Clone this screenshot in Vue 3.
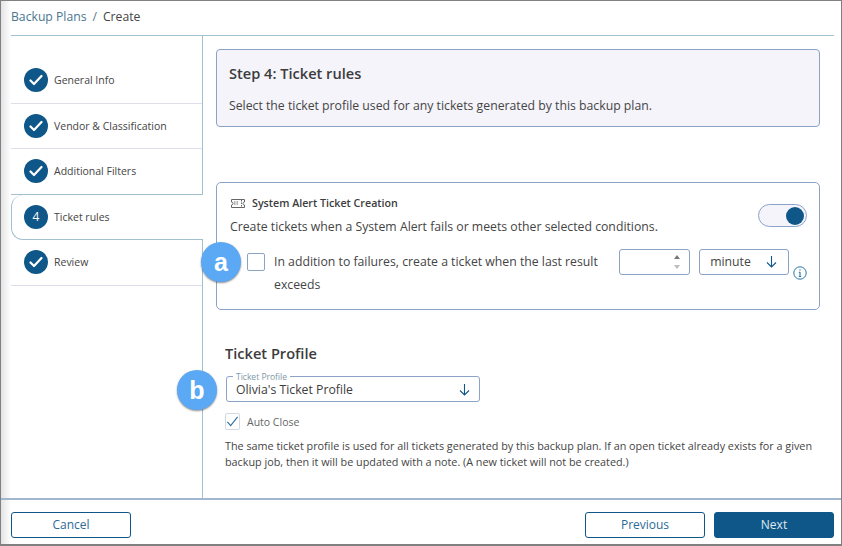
<template>
  <div class="page">
    <header class="crumbs">
      <span class="crumb-link">Backup Plans</span>
      <span class="crumb-sep">/</span>
      <span class="crumb-current">Create</span>
    </header>

    <div class="body">
      <nav class="steps">
        <div
          v-for="step in steps"
          :key="step.label"
          class="step"
          :class="{ active: step.active }"
        >
          <span class="step-dot">
            <template v-if="step.active">{{ step.num }}</template>
            <svg v-else width="14" height="12" viewBox="0 0 14 12" fill="none">
              <path d="M1.5 6.5 L5 10 L12.5 2" stroke="#fff" stroke-width="2.2" stroke-linecap="round" stroke-linejoin="round" />
            </svg>
          </span>
          <span class="step-label">{{ step.label }}</span>
        </div>
      </nav>

      <main class="content">
        <section class="intro">
          <h2>Step 4: Ticket rules</h2>
          <p>Select the ticket profile used for any tickets generated by this backup plan.</p>
        </section>

        <section class="alert-card">
          <span class="badge badge-a">a</span>
          <div class="alert-title">
            <svg width="16" height="11" viewBox="0 0 16 11" fill="none" stroke="#666" stroke-width="1">
              <path d="M1.5 1.5 H14.5 V4 a1.5 1.5 0 0 0 0 3 V9.5 H1.5 V7 a1.5 1.5 0 0 0 0 -3 Z" />
              <path d="M4 4 H9 M4 6 H9 M11.5 2 V9" stroke-dasharray="1.5 1" />
            </svg>
            <span>System Alert Ticket Creation</span>
          </div>
          <div class="alert-desc-row">
            <p>Create tickets when a System Alert fails or meets other selected conditions.</p>
            <span class="toggle"><span class="knob"></span></span>
          </div>
          <div class="exceed-row">
            <span class="box"></span>
            <p class="exceed-text">In addition to failures, create a ticket when the last result exceeds</p>
            <div class="number-input">
              <span class="arrow-up"></span>
              <span class="arrow-down"></span>
            </div>
            <div class="unit-select">
              <span>minute</span>
              <svg width="11" height="13" viewBox="0 0 11 13" fill="none" stroke="#0f5788" stroke-width="1.1">
                <path d="M5.5 1 V11.5 M1 7.5 L5.5 12 L10 7.5" />
              </svg>
            </div>
            <svg class="info" width="14" height="14" viewBox="0 0 14 14" fill="none" stroke="#2a76a8">
              <circle cx="7" cy="7" r="6.2" />
              <path d="M7 6 V10.3 M5.8 6.2 H7 M5.8 10.5 H8.2" stroke-width="1.1" />
              <path d="M7 3.4 V4.6" stroke-width="1.4" />
            </svg>
          </div>
        </section>

        <section class="profile">
          <h3>Ticket Profile</h3>
          <div class="profile-select">
            <span class="badge badge-b">b</span>
            <span class="float-label">Ticket Profile</span>
            <span class="profile-value">Olivia's Ticket Profile</span>
            <svg width="11" height="13" viewBox="0 0 11 13" fill="none" stroke="#0f5788" stroke-width="1.1">
              <path d="M5.5 1 V11.5 M1 7.5 L5.5 12 L10 7.5" />
            </svg>
          </div>
          <div class="auto-close">
            <span class="box small">
              <svg width="14" height="13" viewBox="0 0 14 13" fill="none">
                <path d="M1.5 7 L5 11 L12.5 1.5" stroke="#2c6f9e" stroke-width="1.2" />
              </svg>
            </span>
            <span>Auto Close</span>
          </div>
          <p class="help">
            The same ticket profile is used for all tickets generated by this backup plan. If an open ticket already exists for a given backup job, then it will be updated with a note. (A new ticket will not be created.)
          </p>
        </section>
      </main>
    </div>

    <footer class="actions">
      <button class="btn">Cancel</button>
      <div class="actions-right">
        <button class="btn">Previous</button>
        <button class="btn primary">Next</button>
      </div>
    </footer>
  </div>
</template>

<script setup>
const steps = [
  { label: 'General Info' },
  { label: 'Vendor & Classification' },
  { label: 'Additional Filters' },
  { label: 'Ticket rules', num: 4, active: true },
  { label: 'Review' }
]
</script>

<style>
html, body { margin: 0; background: #fff; }
</style>

<style scoped>
.page {
  box-sizing: border-box;
  width: 842px;
  height: 546px;
  border: 1px solid #808080;
  border-bottom-width: 2px;
  display: flex;
  flex-direction: column;
  font-family: "Open Sans", "Liberation Sans", sans-serif;
  color: #444;
  background: linear-gradient(to right, #e4e4e6 0, #fff 10px);
  overflow: hidden;
}

.crumbs {
  box-sizing: border-box;
  height: 35px;
  margin: 0 7px 0 10px;
  padding-bottom: 4px;
  border-bottom: 1px solid #a3c0cf;
  display: flex;
  align-items: center;
  gap: 6px;
  font-size: 12.2px;
  flex: none;
}
.crumb-link { color: #4a7690; }
.crumb-sep { color: #5d7583; }
.crumb-current { color: #444; }

.body {
  flex: 1;
  display: flex;
  min-height: 0;
  margin-left: 10px;
}

.steps {
  width: 192px;
  box-sizing: border-box;
  flex: none;
  padding-top: 22px;
  border-right: 1px solid #a3c0cf;
  display: flex;
  flex-direction: column;
}
.step {
  height: 45.5px;
  box-sizing: border-box;
  display: flex;
  align-items: center;
  gap: 6px;
  padding-left: 13px;
  border-bottom: 1px solid #dcdfea;
  font-size: 10.5px;
}
.step:nth-child(3) {
  border-bottom: 1px solid #a3c0cf;
}
.step.active {
  margin-right: -1px;
  background: #fff;
  border: 1px solid #a3c0cf;
  border-right: 0;
  border-top: 0;
  border-top-left-radius: 12px;
  border-bottom-left-radius: 12px;
  padding-left: 12px;
  position: relative;
}
.step-dot {
  width: 24px;
  height: 24px;
  border-radius: 50%;
  background: #0f5788;
  color: #fff;
  display: flex;
  align-items: center;
  justify-content: center;
  font-size: 12px;
  flex: none;
}

.content {
  flex: 1;
  padding: 13px 21px 0 13px;
  min-width: 0;
  background: #fff;
}

.intro {
  box-sizing: border-box;
  height: 78px;
  background: #f4f4fa;
  border: 1px solid #8ba3c7;
  border-radius: 4px;
  padding: 14px 12px;
}
.intro h2 {
  margin: 0 0 14px;
  font-size: 14.6px;
  line-height: 19px;
  font-weight: 600;
  color: #3c3c3c;
}
.intro p {
  margin: 0;
  font-size: 12.25px;
  line-height: 17px;
}

.alert-card {
  position: relative;
  box-sizing: border-box;
  height: 128px;
  margin-top: 55px;
  border: 1px solid #8ba3c7;
  border-radius: 5px;
  padding: 13px 12px 0 13px;
}
.alert-title {
  display: flex;
  align-items: center;
  gap: 6px;
  font-size: 10.7px;
  font-weight: 600;
  line-height: 14px;
  color: #3c3c3c;
}
.alert-desc-row {
  display: flex;
  justify-content: space-between;
  align-items: flex-start;
}
.alert-desc-row p {
  margin: 8px 0 0;
  font-size: 12.25px;
  line-height: 17px;
}
.toggle {
  box-sizing: border-box;
  width: 49px;
  height: 23px;
  margin-top: -6px;
  border: 1px solid #8ba3c7;
  border-radius: 12px;
  background: #f4f4fa;
  display: flex;
  justify-content: flex-end;
  align-items: center;
  padding-right: 2px;
}
.knob {
  width: 18px;
  height: 18px;
  border-radius: 50%;
  background: #0f5788;
}

.exceed-row {
  display: flex;
  align-items: flex-start;
  margin-top: 15px;
  margin-left: 17px;
}
.box {
  box-sizing: border-box;
  flex: none;
  width: 18px;
  height: 18px;
  border: 1px solid #8ba3c7;
  border-radius: 2px;
  background: #fff;
  margin-top: 3px;
}
.exceed-text {
  width: 330px;
  margin: 0 0 0 9px;
  font-size: 12.25px;
  line-height: 23px;
}
.number-input {
  box-sizing: border-box;
  width: 71px;
  height: 26px;
  margin: -1px 0 0 16px;
  border: 1px solid #8ba3c7;
  border-radius: 3px;
  position: relative;
}
.arrow-up, .arrow-down {
  position: absolute;
  right: 9px;
  width: 0;
  height: 0;
  border-left: 3.5px solid transparent;
  border-right: 3.5px solid transparent;
}
.arrow-up { top: 5px; border-bottom: 4px solid #777; }
.arrow-down { top: 15px; border-top: 4px solid #bbb; }
.unit-select {
  box-sizing: border-box;
  width: 90px;
  height: 26px;
  margin: -1px 0 0 9px;
  border: 1px solid #8ba3c7;
  border-radius: 3px;
  display: flex;
  align-items: center;
  justify-content: space-between;
  padding: 0 11px 2px 10px;
  font-size: 12.25px;
}
.info {
  margin: 16px 0 0 4px;
  flex: none;
}

.profile {
  padding-left: 10px;
}
.profile h3 {
  margin: 33px 0 13px -1px;
  font-size: 14.6px;
  line-height: 20px;
  font-weight: 600;
  color: #3c3c3c;
}
.profile-select {
  position: relative;
  box-sizing: border-box;
  width: 254px;
  height: 26px;
  border: 1px solid #8ba3c7;
  border-radius: 3px;
  display: flex;
  align-items: center;
  justify-content: space-between;
  padding: 0 9px 0 9px;
  font-size: 12.25px;
  color: #3c3c3c;
}
.float-label {
  position: absolute;
  left: 6px;
  top: -6px;
  padding: 0 3px;
  background: #fff;
  font-size: 8.5px;
  line-height: 11px;
  color: #7d98a8;
}
.auto-close {
  display: flex;
  align-items: center;
  gap: 7px;
  margin-top: 11px;
  margin-left: -1px;
  font-size: 10.5px;
  color: #666;
}
.box.small {
  width: 15px;
  height: 17px;
  margin: 0;
  border-color: #d4d9e4;
  display: flex;
  align-items: center;
  justify-content: center;
}
.help {
  margin: 8px 0 0 -1px;
  width: 590px;
  font-size: 10.8px;
  line-height: 16px;
  color: #444;
}

.badge {
  position: absolute;
  width: 40px;
  height: 40px;
  border-radius: 50%;
  background: #5ba8f5;
  color: #fff;
  font-family: "Liberation Sans", Arial, sans-serif;
  font-weight: 700;
  font-size: 25px;
  display: flex;
  align-items: center;
  justify-content: center;
  box-shadow: 0 1px 2px rgba(0, 0, 0, 0.45);
  z-index: 2;
}
.badge-a { left: -16px; top: 59px; }
.badge-b { left: -50px; top: -7px; }

.actions {
  box-sizing: border-box;
  height: 46px;
  flex: none;
  border-top: 2px solid #a3b6cf;
  padding: 12px 7px 0 10px;
  display: flex;
  justify-content: space-between;
  align-items: flex-start;
  background: linear-gradient(to right, #e4e4e6 0, #fff 10px);
}
.actions-right {
  display: flex;
  gap: 9px;
}
.btn {
  box-sizing: border-box;
  width: 120px;
  height: 26px;
  border: 1px solid #0f5788;
  border-radius: 3px;
  background: #fff;
  color: #2d6a94;
  font-family: inherit;
  font-size: 12px;
  padding: 0 0 2px;
}
.btn.primary {
  background: #0f5788;
  color: #dfe9f0;
}
</style>
